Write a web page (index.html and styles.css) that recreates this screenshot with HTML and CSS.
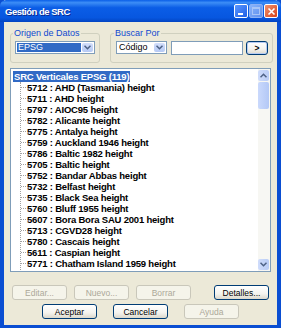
FILE: index.html
```html
<!DOCTYPE html>
<html lang="es">
<head>
  <meta charset="UTF-8">
  <meta name="viewport" content="width=device-width, initial-scale=1.0">
  <title>Gestión de SRC</title>
  <link rel="stylesheet" href="styles.css">
</head>
<body>
  <div class="window">
    <div class="titlebar">
      <span class="title">Gestión de SRC</span>
      <div class="caption-btns">
        <span class="cap min"><span class="bar"></span></span>
        <span class="cap max"><span class="box"></span></span>
        <span class="cap close">
          <svg width="9" height="9" viewBox="0 0 9 9"><path d="M1.5 1.5 L7.5 7.5 M7.5 1.5 L1.5 7.5" stroke="#fff" stroke-width="1.6"/></svg>
        </span>
      </div>
    </div>

    <div class="content">
      <div class="groups">
        <fieldset class="group origin">
          <legend>Origen de Datos</legend>
          <div class="combo active">
            <span class="value">EPSG</span>
            <span class="drop"><svg width="7" height="5" viewBox="0 0 7 5"><path d="M0.5 0.8 L3.5 3.8 L6.5 0.8" fill="none" stroke="#4D6185" stroke-width="1.5"/></svg></span>
          </div>
        </fieldset>
        <fieldset class="group search">
          <legend>Buscar Por</legend>
          <div class="combo code">
            <span class="value">Código</span>
            <span class="drop"><svg width="7" height="5" viewBox="0 0 7 5"><path d="M0.5 0.8 L3.5 3.8 L6.5 0.8" fill="none" stroke="#4D6185" stroke-width="1.5"/></svg></span>
          </div>
          <div class="textbox"></div>
          <button class="btn go">&gt;</button>
        </fieldset>
      </div>

      <div class="listbox">
        <div class="tree">
          <div class="root"><span class="sel">SRC Verticales EPSG (119)</span></div>
          <ul class="items">
            <li>5712 : AHD (Tasmania) height</li>
            <li>5711 : AHD height</li>
            <li>5797 : AIOC95 height</li>
            <li>5782 : Alicante height</li>
            <li>5775 : Antalya height</li>
            <li>5759 : Auckland 1946 height</li>
            <li>5786 : Baltic 1982 height</li>
            <li>5705 : Baltic height</li>
            <li>5752 : Bandar Abbas height</li>
            <li>5732 : Belfast height</li>
            <li>5735 : Black Sea height</li>
            <li>5760 : Bluff 1955 height</li>
            <li>5607 : Bora Bora SAU 2001 height</li>
            <li>5713 : CGVD28 height</li>
            <li>5780 : Cascais height</li>
            <li>5611 : Caspian height</li>
            <li>5771 : Chatham Island 1959 height</li>
            <li>5781 : Constanta height</li>
          </ul>
        </div>
        <div class="scrollbar">
          <span class="sb-btn"><svg width="7" height="5" viewBox="0 0 7 5"><path d="M0.5 4.2 L3.5 1.2 L6.5 4.2" fill="none" stroke="#4D6185" stroke-width="1.5"/></svg></span>
          <span class="thumb"></span>
          <span class="track"></span>
          <span class="sb-btn"><svg width="7" height="5" viewBox="0 0 7 5"><path d="M0.5 0.8 L3.5 3.8 L6.5 0.8" fill="none" stroke="#4D6185" stroke-width="1.5"/></svg></span>
        </div>
      </div>

      <div class="btnrow row1">
        <button class="btn" disabled>Editar...</button>
        <button class="btn" disabled>Nuevo...</button>
        <button class="btn" disabled>Borrar</button>
        <button class="btn details">Detalles...</button>
      </div>
      <div class="btnrow row2">
        <button class="btn">Aceptar</button>
        <button class="btn">Cancelar</button>
        <button class="btn" disabled>Ayuda</button>
      </div>
    </div>
  </div>
</body>
</html>
```

FILE: styles.css
```css
body {
  margin: 0;
  font-family: "Liberation Sans", Arial, sans-serif;
  font-size: 8.5px;
}

.window {
  width: 281px;
  height: 328px;
  box-sizing: border-box;
  background: #ECE9D8;
  border: 4px solid #0A4ED2;
  border-top: none;
  border-bottom-width: 3px;
  display: flex;
  flex-direction: column;
}

.titlebar {
  height: 22px;
  margin: 0 -4px;
  background: linear-gradient(#0A5FE8 0%, #3C8DF6 12%, #0B5DE6 35%, #0757E0 80%, #0344C2 100%);
  display: flex;
  align-items: center;
  justify-content: space-between;
  border-radius: 6px 6px 0 0;
}

.title {
  color: #fff;
  font-weight: bold;
  font-size: 9.5px;
  letter-spacing: -0.5px;
  padding-left: 5px;
  text-shadow: 1px 1px #0A2A90;
}

.caption-btns {
  display: flex;
  gap: 1px;
  margin-right: 3px;
}

.cap {
  width: 12px;
  height: 12px;
  border: 1px solid #fff;
  border-radius: 2px;
  display: flex;
  align-items: center;
  justify-content: center;
  background: linear-gradient(135deg, #5A97FF, #1F5FE6);
}

.cap.min .bar {
  width: 5px;
  height: 2px;
  background: #fff;
  margin-top: 5px;
  margin-right: 2px;
}

.cap.max {
  border-color: #8DB2F5;
  background: linear-gradient(135deg, #8AB4FA, #5C8EEE);
}

.cap.max .box {
  width: 6px;
  height: 5px;
  border: 1px solid #A9C5F7;
  border-top-width: 2px;
}

.cap.close {
  background: linear-gradient(135deg, #F0926F, #D6421B);
}

.content {
  flex: 1;
  padding: 0 4px 0 6px;
  display: flex;
  flex-direction: column;
}

.groups {
  display: flex;
  gap: 10px;
  margin-top: 6px;
}

.group {
  margin: 0;
  border: 1px solid #D0D0BF;
  border-radius: 3px;
  padding: 3px 4px 7px;
  min-width: 0;
}

.group legend {
  color: #1049D0;
  font-size: 9px;
  line-height: 10px;
  padding: 0 1px;
  margin-left: -2px;
}

.origin {
  width: 90px;
  box-sizing: border-box;
}

.search {
  flex: 1;
  display: flex;
  gap: 4px;
  padding-left: 5px;
  padding-right: 4px;
}

.combo {
  height: 13px;
  box-sizing: border-box;
  border: 1px solid #7F9DB9;
  background: #fff;
  display: flex;
  align-items: stretch;
  padding: 1px;
  font-size: 9px;
}

.origin .combo {
  width: 80px;
}

.combo .value {
  flex: 1;
  line-height: 9px;
  padding-left: 1px;
  color: #000;
}

.combo.active .value {
  background: #316AC5;
  color: #fff;
}

.combo .drop {
  width: 11px;
  margin-left: 1px;
  border-radius: 2px;
  background: linear-gradient(#D2DEFB, #B5C9F4);
  display: flex;
  align-items: center;
  justify-content: center;
}

.combo.code {
  width: 51px;
}

.textbox {
  width: 72px;
  height: 14px;
  box-sizing: border-box;
  border: 1px solid #7F9DB9;
  background: #fff;
}

.btn {
  font-family: "Liberation Sans", Arial, sans-serif;
  font-size: 8.5px;
  color: #000;
  width: 55px;
  height: 15px;
  padding: 0;
  box-sizing: border-box;
  border: 1px solid #003C74;
  border-radius: 3px;
  background: linear-gradient(#FFFFFF 0%, #F4F3EE 60%, #DCD8CC 100%);
}

.btn:disabled {
  color: #ACA899;
  border-color: #C9C7BA;
  background: #F5F4EA;
}

.btn.go {
  width: 22px;
  height: 14px;
  font-weight: bold;
  margin-left: -1px;
  box-shadow: inset 0 0 0 1px #B8CCF2;
}

.listbox {
  margin-top: 5px;
  width: 261px;
  height: 204px;
  box-sizing: border-box;
  border: 1px solid #7F9DB9;
  background: #fff;
  display: flex;
  overflow: hidden;
}

.tree {
  flex: 1;
  padding: 2px 0 0 2px;
  font-weight: bold;
  font-size: 9.5px;
  letter-spacing: -0.2px;
  line-height: 11px;
  color: #000;
  overflow: hidden;
}

.root .sel {
  background: #316AC5;
  color: #fff;
  padding: 0 1px;
}

.items {
  list-style: none;
  margin: 0 0 0 7px;
  padding: 0 0 0 6px;
  border-left: 1px dotted #A0A0A0;
}

.items li {
  position: relative;
  white-space: nowrap;
}

.items li::before {
  content: "";
  position: absolute;
  left: -6px;
  top: 5px;
  width: 5px;
  border-top: 1px dotted #A0A0A0;
}

.scrollbar {
  width: 11px;
  padding: 1px 1px 1px 0;
  display: flex;
  flex-direction: column;
  background: #F7F7F3;
}

.sb-btn {
  height: 11px;
  border-radius: 2px;
  background: linear-gradient(90deg, #CFDCFB, #B9CCF5);
  display: flex;
  align-items: center;
  justify-content: center;
}

.thumb {
  height: 27px;
  margin-top: 1px;
  border-radius: 2px;
  background: linear-gradient(90deg, #CAD9FC, #B3C8F6);
}

.track {
  flex: 1;
}

.btnrow {
  display: flex;
}

.row1 {
  margin-top: 13px;
  padding-left: 2px;
  padding-right: 4px;
  gap: 7px;
}

.row1 .details {
  margin-left: auto;
}

.row2 {
  margin-top: 4px;
  justify-content: center;
  gap: 16px;
  padding-right: 2px;
}
```
